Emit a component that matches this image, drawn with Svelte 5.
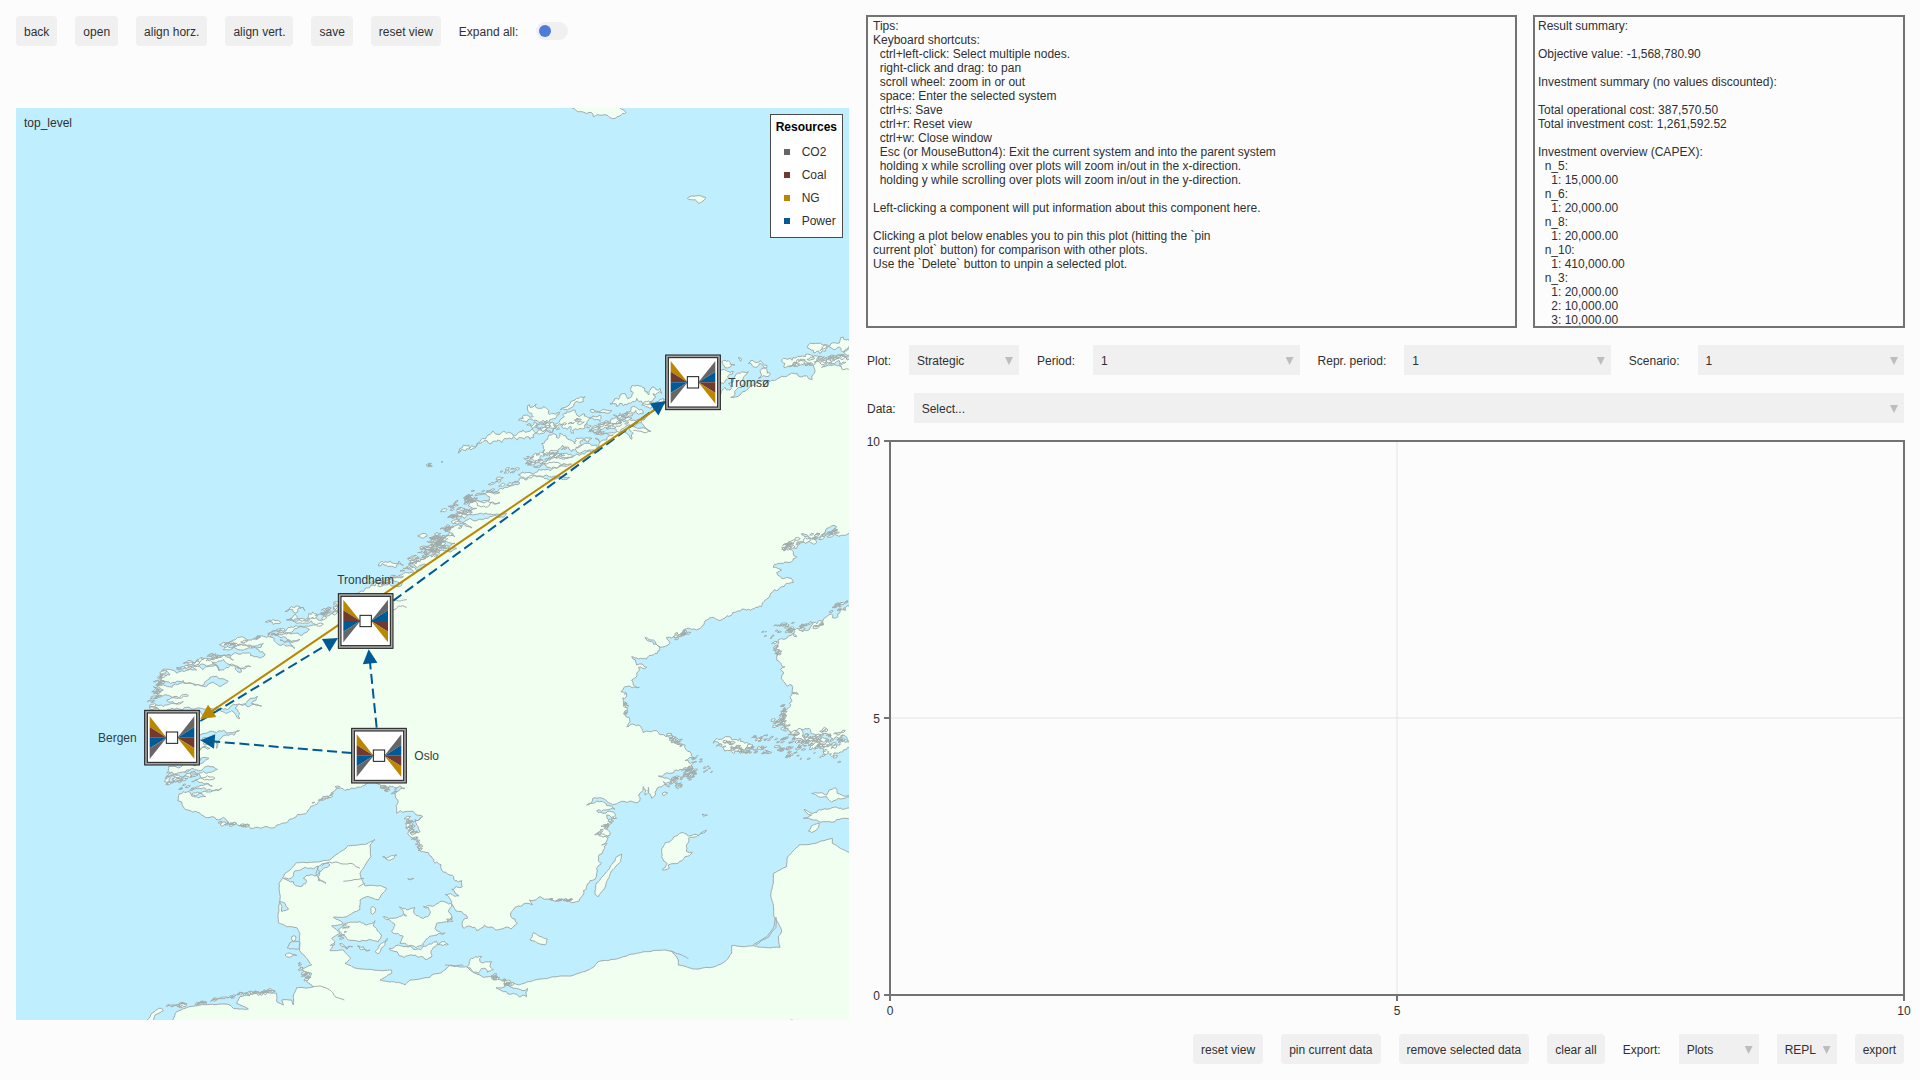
<script>
const selects = [
  {id: "period", label: "Period:", options: ["1", "2", "3"]},
  {id: "repr", label: "Repr. period:", options: ["1"]},
  {id: "scenario", label: "Scenario:", options: ["1"]}
];

const tips = `Tips:
Keyboard shortcuts:
  ctrl+left-click: Select multiple nodes.
  right-click and drag: to pan
  scroll wheel: zoom in or out
  space: Enter the selected system
  ctrl+s: Save
  ctrl+r: Reset view
  ctrl+w: Close window
  Esc (or MouseButton4): Exit the current system and into the parent system
  holding x while scrolling over plots will zoom in/out in the x-direction.
  holding y while scrolling over plots will zoom in/out in the y-direction.

Left-clicking a component will put information about this component here.

Clicking a plot below enables you to pin this plot (hitting the \`pin
current plot\` button) for comparison with other plots.
Use the \`Delete\` button to unpin a selected plot.`;

const summary = `Result summary:

Objective value: -1,568,780.90

Investment summary (no values discounted):

Total operational cost: 387,570.50
Total investment cost: 1,261,592.52

Investment overview (CAPEX):
  n_5:
    1: 15,000.00
  n_6:
    1: 20,000.00
  n_8:
    1: 20,000.00
  n_10:
    1: 410,000.00
  n_3:
    1: 20,000.00
    2: 10,000.00
    3: 10,000.00`;

const colors = {co2: "#666666", coal: "#703a30", ng: "#b98700", power: "#005a96"};

const resources = [
  {name: "CO2", color: colors.co2},
  {name: "Coal", color: colors.coal},
  {name: "NG", color: colors.ng},
  {name: "Power", color: colors.power}
];

const areas = [
  {name: "Tromsø", x: 2031, y: 823, tx: 2137, ty: 837, anchor: "start"},
  {name: "Trondheim", x: 1049, y: 1539, tx: 1049, ty: 1427, anchor: "middle"},
  {name: "Bergen", x: 468, y: 1889, tx: 362, ty: 1903, anchor: "end"},
  {name: "Oslo", x: 1089, y: 1943, tx: 1195, ty: 1956, anchor: "start"}
];

const links = [
  {from: [1952, 881], to: [553, 1833], color: colors.ng, under: true},
  {from: [1132, 1478], to: [1949, 879], color: colors.power, dashed: true},
  {from: [553, 1839], to: [966, 1590], color: colors.power, dashed: true},
  {from: [1082, 1859], to: [1058, 1624], color: colors.power, dashed: true},
  {from: [1007, 1935], to: [553, 1897], color: colors.power, dashed: true}
];

// fans of the area icon, top to bottom
const leftFan = [colors.ng, colors.coal, colors.power, colors.co2];
const rightFan = [colors.co2, colors.power, colors.coal, colors.ng];

function fan(side, i) {
  const top = -64 + i * 32;
  return `${side * 67},${top} ${side * 67},${top + 32} ${side * 16},0`;
}

function head(link) {
  const [x, y] = link.to;
  const dx = x - link.from[0];
  const dy = y - link.from[1];
  const len = Math.hypot(dx, dy);
  const ux = dx / len;
  const uy = dy / len;
  const bx = x - ux * 43;
  const by = y - uy * 43;
  return `${x},${y} ${bx - uy * 22},${by + ux * 22} ${bx + uy * 22},${by - ux * 22}`;
}

function shaft(link) {
  const [x, y] = link.to;
  const dx = x - link.from[0];
  const dy = y - link.from[1];
  const len = Math.hypot(dx, dy);
  return {x: x - dx / len * 35, y: y - dy / len * 35};
}

// The coast is kept in three sheets, each with its own origin on the map
const sheets = {n: [1152, -24], w: [-18, 1296], e: [1242, 1296]};

function pts(sheet, text) {
  const [ox, oy] = sheets[sheet];
  return text.trim().split(/\s+/).map(p => {
    const [x, y] = p.split(",").map(Number);
    return [x + ox, y + oy];
  });
}

let seed = 7;
function rnd() {
  seed = (seed * 16807) % 2147483647;
  return seed / 2147483647;
}

// midpoint displacement between two points
function rough(a, b, amp) {
  const dx = b[0] - a[0];
  const dy = b[1] - a[1];
  const len = Math.hypot(dx, dy);
  if (len < 9) {
    return [b];
  }
  const k = (rnd() - 0.5) * amp;
  const m = [(a[0] + b[0]) / 2 - dy * k, (a[1] + b[1]) / 2 + dx * k];
  return [...rough(a, m, amp), ...rough(m, b, amp)];
}

function outline(points, amp, closed = true) {
  let out = [points[0]];
  for (let i = 1; i < points.length; i++) {
    out = out.concat(rough(points[i - 1], points[i], amp));
  }
  return "M" + out.map(p => `${Math.round(p[0])},${Math.round(p[1])}`).join("L") + (closed ? "Z" : "");
}

const scandinavia = [
  ...pts("n", `1365,795 1347,800 1310,797 1265,802 1300,790 1240,797 1243,820 1237,838 1200,830 1180,820 1145,828 1110,845 1085,842 1060,856 1040,870 1020,885 992,892 1010,868 1032,850 1045,815 1020,820 1000,845 985,850 990,870 975,862 963,880 950,900
    800,900 780,915 760,935 740,950 720,965 745,990 752,994 720,985 690,975 700,1000 695,1018 680,1000 650,995 620,1000 570,990 600,1005 640,1005 620,1020 585,1015 598,1050 590,1035 560,1030 520,1045 575,1050 597,1055 560,1055 530,1062 480,1062 520,1070 490,1078
    450,1080 400,1100 430,1092 480,1095 515,1092 470,1105 430,1108 380,1118 355,1124 400,1128 440,1125 480,1130 510,1132 470,1136 430,1132 380,1140 340,1148 320,1155 360,1150 300,1165 260,1172 300,1177 250,1182 225,1188 270,1192 215,1200 300,1208 240,1205
    205,1218 230,1225 190,1232 215,1238 165,1250 220,1245 260,1240 300,1243 320,1240 270,1250 210,1255 160,1265 190,1270 216,1284 180,1276 140,1290 150,1300 165,1310 130,1315 110,1325 140,1325 165,1330 130,1335 95,1340 140,1345 170,1345 120,1352 110,1342`),
  ...pts("w", `1290,15 1260,25 1290,35 1255,50 1230,65 1195,72 1250,75 1235,90 1180,85 1215,100 1170,105 1140,115 1180,125 1165,140 1125,130 1085,135 1050,155 1020,165 1000,185 985,200 985,215 960,225 940,238 900,228 870,240 830,238 860,250 905,243 940,252 880,262
    840,262 800,268 850,272 898,268 850,280 795,285 820,290 870,298 810,300 855,325 820,312 780,290 740,293 700,292 660,305 690,312 760,310 715,320 670,318 640,330 700,330 765,342 700,338 650,345 615,345 670,360 615,355 560,360 520,370 555,368 610,370 628,393
    605,365 640,358 680,378 722,380 680,382 695,395 665,372 600,378 555,380 500,382 560,390 510,395 500,400 470,388 455,392 480,405 450,405 455,418 430,425 470,425 520,422 585,425 655,424 600,430 560,434 540,428 510,430 460,435 430,440 460,450 445,460 440,468
    480,468 535,468 500,475 470,480 520,485 480,492 440,495 430,505 480,508 530,502 580,507 620,500 660,500 705,492 720,475 742,468 724,490 755,498 715,500 675,505 690,535 665,512 630,510 570,512 480,550 570,585 620,578 660,578 688,572 650,585 625,602 620,625
    612,602 580,612 590,595 570,600 570,628 600,625 560,640 570,662 597,655 580,668 475,680 470,700 510,698 540,690 560,690 600,680 622,688 580,694 540,700 570,705 615,715 570,714 545,725 580,730 607,738 570,737 545,745 590,752 635,745 590,756 545,763 587,770
    550,769 520,755 507,762 503,782 520,800 540,812 575,825 600,832 625,840 640,832 655,845 645,855 680,852 700,860 730,865 760,862 800,855 815,850 850,835 880,822 900,805 930,780 960,768 990,740 975,740 1005,752 1030,745 1058,738 1080,722 1110,733 1150,740
    1185,745 1155,760 1165,785 1160,820 1185,815 1215,820 1238,830 1215,838 1220,855 1230,875 1210,880 1200,860 1190,845 1200,890 1225,905 1240,935 1265,950 1275,970`),
  ...pts("e", `20,965 35,990 60,1005 75,1022 95,1022 97,1040 65,1048 87,1068 45,1063 65,1085 95,1115 112,1135 97,1145 103,1165 140,1172 190,1163 243,1167 262,1150 243,1130 245,1115 280,1092 307,1095 298,1080 350,1077 400,1078 433,1087 455,1070 460,1052 480,1022
    495,1018 500,985 515,970 505,950 520,930 530,910 515,915 535,890 500,880 540,885 525,860 545,850 530,825 560,835 545,815 500,812 555,808 530,797 470,795 560,792 600,783 630,778 640,740 645,765 655,742 665,775 680,750 720,740 700,725 735,718 685,708 720,700
    760,685 800,665 765,662 795,655 780,635 765,615 740,612 722,580 745,605 720,600 680,572 640,578 635,565 590,560 600,545 585,525 590,500 580,485 590,465 573,455 585,440 628,442 610,435 605,420 620,400 625,382 650,382 620,375 605,350 625,357 670,345 690,330
    665,305 645,293 670,300 690,322 720,310 710,292 740,290 770,265 800,270 830,240 850,232 870,242 900,228 950,210 995,200 1020,165 1090,128 1070,112 1040,98 1055,90 1030,82 1060,70 1100,50 1085,30 1055,22 1100,25 1125,5 1160,8 1113,-18 1160,-5 1190,-35
    1220,-40 1210,-20 1257,-20 1275,-20`)
];

const finland = pts("e", `1275,195 1257,198 1230,210 1190,230 1180,255 1130,272 1090,268 1100,290 1070,295 1045,310 1030,330 1040,360 1065,380 1055,410 1085,435 1087,450 1105,462 1085,465 1080,500 1060,520 1055,540 1075,570 1115,568 1150,582 1210,597 1200,605 1257,603 1275,603`);

const continent = [
  ...pts("e", `1275,945 1257,937 1207,910 1207,895 1140,913 1107,915 1073,950 1070,980 1030,1000 1030,1030 1022,1065 1030,1100 1032,1130 1045,1150 1055,1175 1045,1190 1050,1222 1010,1223 970,1217 905,1217 905,1240 880,1268 845,1282 790,1287 745,1275 745,1260
    727,1235 700,1230 650,1235 600,1243 560,1257 505,1265 490,1282 465,1295 380,1310 300,1325 265,1335 230,1325 190,1310 160,1312 110,1280 60,1275 35,1297 5,1305`),
  ...pts("w", `1260,1312 1200,1320 1185,1335 1150,1325 1110,1320 1145,1300 1145,1290 1040,1285 1005,1270 1022,1255 1000,1230 960,1232 975,1205 965,1195 990,1180 965,1158 1000,1150 970,1132 1010,1130 1050,1108 1050,1080 1070,1070 1105,1080 1130,1045 1115,1038
    1065,1038 1050,1000 1060,985 1083,950 1080,915 1095,898 1070,912 1015,917 985,940 960,960 905,967 860,968 825,1000 807,1030 807,1110 805,1148 830,1160 860,1163 870,1180 868,1230 905,1275 875,1290 905,1300 890,1325 910,1340 860,1343 850,1365 850,1395
    845,1380 815,1380 820,1395 800,1385 800,1360 740,1360 690,1370 680,1390 715,1407 670,1405 660,1395 600,1393 540,1400 500,1415 475,1460 2540,1460`)
];

const islands = [
  // Lofoten, Vesterålen and Troms
  ["n", 0.8, "175,1060 190,1035 240,1025 260,1010 300,1003 340,1008 360,995 420,985 470,978 430,1000 390,1018 340,1010 290,1025 240,1030 210,1045"],
  ["n", 0.9, "355,960 380,945 400,950 385,935 440,925 445,940 480,935 470,950 420,968 400,962 380,966"],
  ["n", 0.5, "480,930 510,912 530,895 555,890 550,905 510,925"],
  ["n", 0.9, "480,960 500,935 520,930 530,945 545,945 600,945 600,965 560,970 540,985 520,1000 490,985 460,975 380,975 440,968"],
  ["n", 0.9, "630,912 660,885 700,878 690,865 720,858 780,865 785,880 750,905 710,895 670,918"],
  ["n", 0.7, "640,945 680,935 725,928 730,940 690,948 660,955"],
  ["n", 0.8, "575,985 610,970 660,960 700,960 735,950 690,975 630,985"],
  ["n", 0.5, "570,930 610,928 635,932 580,938"],
  ["n", 0.9, "380,1070 430,1045 500,1015 550,1015 545,1035 480,1045 460,1055 420,1078 390,1075"],
  ["n", 0.7, "725,915 770,905 790,895 790,910 750,925"],
  ["n", 0.8, "1150,775 1200,770 1260,780 1240,795 1170,800 1145,785"],
  ["n", 0.8, "1225,735 1280,745 1320,722 1365,730 1365,748 1300,748 1260,752 1280,742"],
  ["n", 0.8, "1260,775 1320,765 1365,770 1365,787 1290,780"],
  ["n", 0.5, "1330,755 1365,755 1365,763 1335,762"],
  ["n", 0.6, "965,785 985,782 1005,795 975,803"],
  ["n", 0.7, "1045,790 1080,782 1100,795 1095,805 1060,800"],
  ["n", 0.7, "1080,812 1100,808 1112,822 1105,830 1075,835"],
  ["n", 0.7, "965,810 1000,815 985,835 970,850"],
  ["n", 0.5, "1015,772 1025,777 1022,784"],
  ["n", 0.5, "53,1308 68,1300 82,1308 68,1315"],
  ["n", 0.5, "22,1376 40,1368 58,1374 40,1380"],
  ["n", 0.4, "862,295 885,288 917,292 905,305 895,310 880,300"],
  ["n", 0.4, "505,15 545,35 575,38 580,50 600,46 630,53 660,48 678,38 655,15"],
  // Trøndelag and the west coast
  ["w", 0.8, "825,215 845,200 880,202 885,212 850,216"],
  ["w", 0.8, "830,240 855,222 920,222 920,230 870,236"],
  ["w", 0.5, "766,246 790,238 812,248 790,254"],
  ["w", 0.7, "1105,78 1112,66 1150,70 1180,76 1150,80 1130,76"],
  ["w", 0.6, "1195,55 1212,50 1225,55 1205,58"],
  ["w", 0.7, "970,200 985,192 985,215 965,222"],
  ["w", 0.6, "468,710 480,708 483,730 472,735"],
  ["w", 0.8, "490,705 530,700 545,712 500,716"],
  // Denmark
  ["w", 0.4, "985,1168 1005,1150 1050,1145 1070,1155 1095,1142 1090,1158 1115,1185 1105,1205 1050,1205 1000,1185"],
  ["w", 0.4, "1120,1130 1150,1135 1190,1128 1168,1100 1215,1103 1212,1120 1240,1135 1260,1120 1255,1102 1240,1100 1290,1085 1325,1092 1315,1115 1325,1138 1310,1145 1280,1150 1275,1165 1305,1178 1265,1188 1240,1215 1195,1218 1170,1210 1180,1190 1145,1175 1155,1155"],
  ["w", 0.5, "1138,1225 1165,1215 1210,1228 1250,1218 1280,1205 1315,1213 1270,1222 1245,1258 1215,1245 1170,1248"],
  ["w", 0.4, "1095,1235 1115,1210 1132,1195 1120,1220 1103,1242"],
  ["w", 0.5, "1042,1218 1060,1220 1080,1230 1060,1228"],
  ["w", 0.6, "990,1210 1028,1220 1010,1228"],
  ["w", 0.5, "1082,1105 1090,1100 1097,1112 1087,1123"],
  ["w", 0.5, "1118,950 1160,945 1145,958 1128,957"],
  ["w", 0.5, "1193,1016 1211,1015 1202,1020"],
  ["w", 0.5, "845,1190 858,1190 855,1202 845,1200"],
  ["w", 0.6, "825,1245 832,1240 860,1246 830,1250"],
  // Baltic
  ["e", 0.2, "310,1178 352,1197 345,1215 300,1200 310,1178"],
  ["e", 0.3, "695,925 725,900 760,878 775,888 830,870 800,890 775,895 770,935 787,937 765,950 715,975 718,985 697,990 712,972 695,950"],
  ["e", 0.2, "575,942 572,965 545,992 530,1025 505,1070 495,1062 500,1028 530,995 560,950"],
  ["e", 0.3, "817,822 832,825 820,829"],
  ["e", 0.5, "50,1137 65,1132 68,1145 53,1147"],
  ["e", 0.7, "112,1280 130,1255 155,1250 150,1265 185,1265 180,1280 190,1290 160,1285 145,1300"],
  ["e", 0.3, "1145,760 1190,765 1198,750 1215,743 1222,760 1275,768 1275,773 1225,775 1205,787 1190,770"],
  ["e", 0.4, "1120,835 1145,825 1122,808 1150,820 1190,808 1275,797 1275,825 1220,838 1190,845 1150,840"],
  ["e", 0.4, "1135,873 1150,855 1168,850 1160,870 1145,878"],
  ["e", 0.9, "850,610 880,595 930,595 940,605 960,612 945,628 980,630 930,640 905,625 880,625"],
  ["e", 0.8, "1180,640 1220,615 1275,608 1275,622 1225,640 1205,650"],
  ["e", 0.9, "1080,575 1120,580 1160,600 1200,612 1170,618 1120,600"]
];

const lakes = [
  ["w", 0.6, "820,1015 850,1008 860,992 895,985 925,978 928,995 915,1008 880,1015 890,1025 870,1040 850,1025 835,1022"],
  ["w", 0.4, "925,980 960,975 940,985 925,1010 948,1030 925,1022 918,1000"],
  ["w", 0.3, "808,1085 825,1090 835,1108 815,1115 808,1085"],
  ["w", 0.3, "840,1208 868,1205 868,1226 832,1224"],
  ["e", 0.5, "198,1343 240,1340 292,1345 290,1370 250,1360 220,1355"]
];

const creeks = [
  ["w", 0.3, "935,978 1000,972 1050,985"],
  ["w", 0.2, "1000,1024 1035,1018 1062,1016"],
  ["w", 0.3, "1045,1042 1065,1030"],
  ["w", 0.2, "905,1340 950,1345 975,1370 1003,1380"],
  ["w", 0.3, "1150,180 1190,178"],
  ["w", 0.3, "1150,210 1165,198 1190,202"],
  ["w", 0.2, "1205,870 1210,845 1235,832"],
  ["e", 0.1, "970,1214 1010,1190 1032,1160 1036,1132"],
  ["e", 0.1, "976,1216 1015,1192 1038,1162 1039,1132"],
  ["e", 0.2, "722,1233 750,1243 775,1257"],
  ["e", 0.2, "45,1275 75,1280 100,1276"],
  ["n", 0.3, "700,992 752,994"],
  ["n", 0.3, "420,1092 500,1094"]
];

// [sheet, x, y, x2, y2, spread, count, size] - skerries strewn along a line
const skerries = [
  ["e", 975, 615, 1240, 590, 28, 90, 7],
  ["e", 1060, 640, 1240, 650, 16, 20, 5],
  ["e", 870, 610, 975, 630, 14, 28, 7],
  ["e", 1030, 545, 1075, 560, 14, 15, 6],
  ["e", 700, 745, 800, 690, 20, 34, 9],
  ["e", 790, 655, 850, 700, 15, 12, 4],
  ["e", 725, 295, 785, 268, 8, 14, 7],
  ["e", 500, 880, 560, 830, 10, 12, 6],
  ["e", 1035, 265, 1180, 255, 13, 26, 8],
  ["e", 1205, 210, 1245, 195, 12, 14, 6],
  ["e", 1035, 300, 1050, 360, 8, 10, 6],
  ["e", 350, 1078, 430, 1080, 3, 12, 6],
  ["e", 1060, 20, 1230, -30, 12, 32, 8],
  ["e", 580, 450, 590, 530, 7, 10, 5],
  ["e", 720, 590, 760, 615, 9, 12, 7],
  ["e", 190, 1310, 270, 1345, 6, 12, 7],
  ["e", 985, 265, 1030, 300, 10, 5, 3],
  ["e", 1060, 500, 1060, 545, 9, 16, 6],
  ["n", 90, 1350, 220, 1200, 24, 46, 10],
  ["n", 110, 1240, 320, 1140, 14, 22, 8],
  ["n", 380, 1085, 500, 1055, 12, 18, 11],
  ["n", 560, 1000, 700, 945, 18, 20, 12],
  ["n", 380, 980, 560, 970, 14, 12, 9],
  ["n", 1150, 790, 1340, 775, 12, 20, 11],
  ["n", 300, 1110, 360, 1105, 10, 6, 6],
  ["n", 70, 1100, 165, 1072, 5, 5, 6],
  ["w", 1200, 70, 1310, 0, 20, 30, 12],
  ["w", 1090, 135, 1200, 90, 10, 12, 10],
  ["w", 920, 240, 990, 200, 16, 20, 7],
  ["w", 640, 315, 820, 270, 8, 12, 12],
  ["w", 510, 380, 640, 340, 8, 12, 10],
  ["w", 425, 500, 460, 400, 12, 24, 8],
  ["w", 470, 720, 560, 700, 14, 14, 8],
  ["w", 500, 740, 560, 745, 8, 6, 7],
  ["w", 625, 845, 715, 858, 4, 12, 7],
  ["w", 1115, 740, 1160, 755, 8, 12, 6],
  ["w", 1190, 830, 1235, 930, 10, 18, 8],
  ["w", 900, 795, 980, 760, 6, 9, 6],
  ["w", 865, 1265, 900, 1320, 12, 10, 7],
  ["w", 970, 1220, 1010, 1160, 12, 8, 7],
  ["w", 470, 1398, 600, 1385, 2, 8, 15],
  ["w", 610, 1380, 670, 1368, 2, 5, 10],
  ["w", 680, 1362, 790, 1352, 1, 8, 16]
];

function strew([sheet, x1, y1, x2, y2, spread, count, size]) {
  const [ox, oy] = sheets[sheet];
  let d = "";
  for (let i = 0; i < count; i++) {
    const t = rnd();
    const x = ox + x1 + (x2 - x1) * t + (rnd() - 0.5) * spread;
    const y = oy + y1 + (y2 - y1) * t + (rnd() - 0.5) * spread * 2;
    const w = size * (0.4 + rnd());
    const h = Math.min(w, 8) * (0.2 + rnd() * 0.4);
    d += outline([[x - w, y + h], [x, y - h], [x + w, y - h * rnd()], [x + w * 0.3, y + h], [x - w, y + h]], 0.8);
  }
  return d;
}

const land = outline(scandinavia, 0.5) + outline(finland, 0.8);
const mainland = outline(continent, 0.12);
const isles = islands.map(([s, amp, text]) => {
  const p = pts(s, text);
  return outline([...p, p[0]], amp);
}).join("");
const specks = skerries.map(strew).join("");
const water = lakes.map(([s, amp, text]) => outline(pts(s, text), amp)).join("");
const inlets = creeks.map(([s, amp, text]) => outline(pts(s, text), amp, false)).join("");
const frisia = outline(pts("w", "412,1440 425,1420 455,1405 460,1412 435,1425 425,1445"), 0.3);

let expandAll = false;
</script>

<main class="page">
  <section class="left">
    <div class="toolbar">
      <button>back</button>
      <button>open</button>
      <button>align horz.</button>
      <button>align vert.</button>
      <button>save</button>
      <button>reset view</button>
      <label for="expand">Expand all:</label>
      <input id="expand" class="toggle" type="checkbox" bind:checked={expandAll}>
    </div>

    <div class="map">
      <svg viewBox="0 0 2499 2736" role="img" aria-label="Map of the energy system">
        <rect class="sea" width="2499" height="2736"/>
        <g class="coast">
          <path d={land}/>
          <path d={mainland}/>
          <path d={isles}/>
          <path d={specks}/>
          <path d={frisia}/>
          <path class="water" d={water}/>
          <path class="inlet" d={inlets}/>
        </g>
        {#each links.filter(l => l.dashed) as link}
          <line class="link link--dashed" x1={link.from[0]} y1={link.from[1]} x2={shaft(link).x} y2={shaft(link).y} stroke={link.color}/>
        {/each}
        {#each links.filter(l => l.under) as link}
          <line class="link" x1={link.from[0]} y1={link.from[1]} x2={shaft(link).x} y2={shaft(link).y} stroke={link.color}/>
        {/each}
        {#each links as link}
          <polygon points={head(link)} fill={link.color}/>
        {/each}
        {#each areas as area}
          <g transform="translate({area.x} {area.y})">
            <rect class="frame" x="-82" y="-82" width="164" height="164"/>
            <rect class="box" x="-74" y="-74" width="148" height="148"/>
            {#each leftFan as color, i}
              <polygon points={fan(-1, i)} fill={color}/>
            {/each}
            {#each rightFan as color, i}
              <polygon points={fan(1, i)} fill={color}/>
            {/each}
            <rect class="box" x="-17" y="-17" width="34" height="34"/>
          </g>
          <text x={area.tx} y={area.ty} text-anchor={area.anchor}>{area.name}</text>
        {/each}
      </svg>
      <span class="level">top_level</span>
      <div class="legend">
        <strong>Resources</strong>
        <ul>
          {#each resources as resource}
            <li><i style="background: {resource.color}"></i>{resource.name}</li>
          {/each}
        </ul>
      </div>
    </div>
  </section>

  <section class="right">
    <div class="panels">
      <pre class="panel panel--tips">{tips}</pre>
      <pre class="panel panel--summary">{summary}</pre>
    </div>

    <div class="row">
      <label for="plot">Plot:</label>
      <div class="menu menu--plot">
        <select id="plot"><option>Strategic</option><option>Operational</option></select>
      </div>
      {#each selects as item (item.id)}
        <label for={item.id}>{item.label}</label>
        <div class="menu menu--grow">
          <select id={item.id}>
            {#each item.options as option}
              <option>{option}</option>
            {/each}
          </select>
        </div>
      {/each}
    </div>

    <div class="row">
      <label for="data">Data:</label>
      <div class="menu menu--grow">
        <select id="data"><option>Select...</option></select>
      </div>
    </div>

    <svg class="plot" role="img" aria-label="Empty plot">
      <line class="grid" x1="50%" y1="0" x2="50%" y2="100%"/>
      <line class="grid" x1="0" y1="50%" x2="100%" y2="50%"/>
      <rect class="axes" width="100%" height="100%"/>
      {#each [0, 5, 10] as tick}
        <svg class="tick" x="{tick * 10}%" y="100%">
          <line class="axes" x1="0" y1="0" x2="0" y2="6"/>
          <text x="0" y="20" text-anchor="middle">{tick}</text>
        </svg>
        <svg class="tick" x="0" y="{100 - tick * 10}%">
          <line class="axes" x1="-6" y1="0" x2="0" y2="0"/>
          <text x="-10" y="5" text-anchor="end">{tick}</text>
        </svg>
      {/each}
    </svg>

    <div class="row row--end">
      <button>reset view</button>
      <button>pin current data</button>
      <button>remove selected data</button>
      <button>clear all</button>
      <label for="what">Export:</label>
      <div class="menu menu--what">
        <select id="what"><option>Plots</option><option>All</option></select>
      </div>
      <div class="menu menu--target">
        <select aria-label="Export target"><option>REPL</option><option>xlsx</option></select>
      </div>
      <button>export</button>
    </div>
  </section>
</main>

<style>
:global(body) {
  background: #fcfcfc;
}

.page {
  box-sizing: border-box;
  display: grid;
  grid-template-columns: 833fr 1037fr;
  gap: 18px;
  min-height: 100vh;
  padding: 16px;
  color: #303030;
  font: 12px/14px "Liberation Sans", Arial, sans-serif;
}

.left {
  display: flex;
  flex-direction: column;
  gap: 62px;
}

.right {
  display: flex;
  flex-direction: column;
  gap: 18px;
}

.toolbar,
.row {
  display: flex;
  align-items: center;
  gap: 18px;
}

.row--end {
  justify-content: flex-end;
  margin-top: 21px;
}

button {
  height: 30px;
  padding: 2px 8px 0;
  border: 0;
  border-radius: 4px;
  background: #f0f0f0;
  color: inherit;
  font: inherit;
  white-space: nowrap;
}

label {
  padding-top: 2px;
  white-space: nowrap;
}

.toggle {
  appearance: none;
  width: 32px;
  height: 18px;
  margin: 0;
  padding: 3px;
  border-radius: 9px;
  background: #f0f0f0;
}

.toggle::before {
  content: "";
  display: block;
  width: 12px;
  height: 12px;
  border-radius: 50%;
  background: #4f7bd9;
}

.toggle:checked::before {
  margin-left: auto;
}

.map {
  position: relative;
}

.map svg {
  display: block;
  width: 100%;
  height: auto;
}

.sea {
  fill: #bfefff;
}

.coast path {
  fill: #f0fff0;
  stroke: #a0abab;
  stroke-width: 3;
  stroke-linejoin: round;
}

.coast .water {
  fill: #bfefff;
}

.coast .inlet {
  fill: none;
}

.link {
  stroke-width: 6;
}

.link--dashed {
  stroke-dasharray: 30 14;
}

.frame {
  fill: #a6a6a6;
  stroke: #1a1a1a;
  stroke-width: 3;
}

.box {
  fill: #fff;
  stroke: #1a1a1a;
  stroke-width: 3;
}

.map text {
  fill: #30403f;
  font-size: 36px;
}

.level {
  position: absolute;
  top: 8px;
  left: 8px;
}

.legend {
  position: absolute;
  top: 6px;
  right: 6px;
  padding: 5px 5px;
  border: 1px solid #4a4a4a;
  background: #fff;
}

.legend strong {
  color: #000;
}

.legend ul {
  margin: 6px 0 0;
  padding: 0;
  list-style: none;
}

.legend li {
  display: flex;
  align-items: center;
  gap: 12px;
  height: 23px;
  padding-left: 8px;
}

.legend i {
  width: 6px;
  height: 6px;
}

.panels {
  display: grid;
  grid-template-columns: 651fr 372fr;
  gap: 16px;
  margin: -1px -1px -1px;
}

.panel {
  box-sizing: border-box;
  height: 313px;
  margin: 0;
  padding: 2px 5px 0;
  overflow: hidden;
  border: 2px solid #737373;
  font: inherit;
}

.panel--summary {
  padding-left: 3px;
}

.menu {
  position: relative;
}

.menu::after {
  content: "";
  position: absolute;
  top: 12px;
  right: 6px;
  width: 8px;
  height: 8px;
  background: #bdbdbd;
  clip-path: polygon(0 0, 100% 0, 50% 100%);
  pointer-events: none;
}

.menu--plot {
  width: 110px;
}

.menu--grow {
  flex: 1;
}

.menu--what {
  width: 80px;
}

.menu--target {
  width: 60px;
}

select {
  appearance: none;
  display: block;
  width: 100%;
  height: 30px;
  padding: 2px 8px 0;
  border: 0;
  border-radius: 0;
  background: #f0f0f0;
  color: inherit;
  font: inherit;
}

.plot {
  flex: 1;
  min-height: 300px;
  width: calc(100% - 23px);
  margin-left: 23px;
  overflow: visible;
}

.tick {
  overflow: visible;
}

.axes {
  fill: none;
  stroke: #737373;
  stroke-width: 2;
}

.grid {
  stroke: #e4e4e4;
}

.plot text {
  fill: #303030;
}
</style>
